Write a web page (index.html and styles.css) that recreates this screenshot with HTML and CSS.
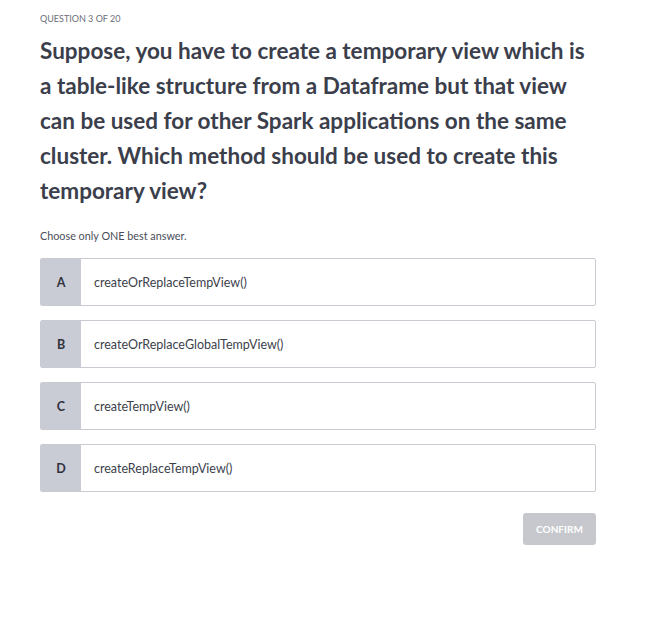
FILE: index.html
```html
<!DOCTYPE html>
<html>
<head>
<meta charset="utf-8">
<link rel="stylesheet" href="styles.css">
</head>
<body>
<main class="quiz">
  <div class="counter">QUESTION 3 OF 20</div>
  <h1 class="question">Suppose, you have to create a temporary view which is a table-like structure from a Dataframe but that view can be used for other Spark applications on the same cluster. Which method should be used to create this temporary view?</h1>
  <p class="hint">Choose only ONE best answer.</p>
  <ul class="options">
    <li class="option"><span class="letter">A</span><span class="text">createOrReplaceTempView()</span></li>
    <li class="option"><span class="letter">B</span><span class="text">createOrReplaceGlobalTempView()</span></li>
    <li class="option"><span class="letter">C</span><span class="text">createTempView()</span></li>
    <li class="option"><span class="letter">D</span><span class="text">createReplaceTempView()</span></li>
  </ul>
  <div class="actions"><button class="confirm">CONFIRM</button></div>
</main>
</body>
</html>
```
FILE: styles.css
```css
html, body { margin: 0; padding: 0; background: #fff; }
body { font-family: "Lato", "Open Sans", sans-serif; color: #3c3f4c; }
.quiz { width: 556px; padding: 13px 0 0 40px; }
.counter { font-size: 9px; color: #6b6e78; line-height: 12px; }
.question { font-size: 22.5px; font-weight: 700; line-height: 35px; margin: 8px 0 0 0; color: #3b3e4b; }
.hint { font-size: 10.8px; color: #4a4d58; margin: 21px 0 0 0; line-height: 14px; }
.options { list-style: none; margin: 15px 0 0 0; padding: 0; display: flex; flex-direction: column; gap: 14px; }
.option { display: flex; height: 48px; box-sizing: border-box; border: 1px solid #c9cbd2; border-radius: 2px; overflow: hidden; }
.letter { width: 40px; flex: none; background: #c9ccd5; display: flex; align-items: center; justify-content: center; font-size: 12.5px; font-weight: 700; color: #30323c; }
.text { display: flex; align-items: center; padding-left: 13px; font-size: 12.5px; color: #3c3f4c; }
.actions { display: flex; justify-content: flex-end; margin-top: 21px; }
.confirm { width: 73px; height: 32px; border: none; border-radius: 3px; background: #c6c8cd; color: #fff; font-family: inherit; font-size: 10px; font-weight: 700; }
```
